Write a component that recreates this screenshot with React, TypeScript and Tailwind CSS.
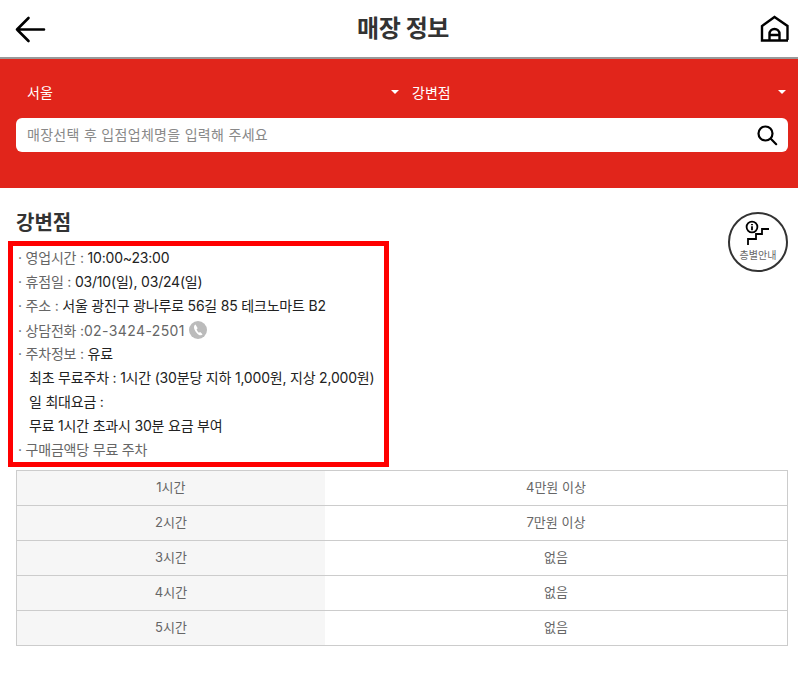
import React from 'react';

const font = { fontFamily: 'Inter, "Noto Sans CJK KR", "Noto Sans", sans-serif' };

const parking = [
  ['1시간', '4만원 이상'],
  ['2시간', '7만원 이상'],
  ['3시간', '없음'],
  ['4시간', '없음'],
  ['5시간', '없음'],
];

const Caret = () => (
  <span className="h-0 w-0 border-x-[4px] border-t-[4px] border-x-transparent border-t-white" />
);

const InfoLine = ({ label, children }: { label: string; children?: React.ReactNode }) => (
  <p className="h-6 whitespace-nowrap text-[14px] leading-[24px] tracking-[-0.2px] text-[#666]">
    · {label}
    <span className="text-[#222]">{children}</span>
  </p>
);

export default function App() {
  return (
    <div className="h-[690px] w-[798px] overflow-hidden bg-white" style={font}>
      {/* 상단 헤더 */}
      <header className="flex h-[59px] items-center justify-between border-b-2 border-[#999] pl-[15px] pr-[9px]">
        <svg width="31" height="28" viewBox="0 0 31 28" fill="none" stroke="#000" strokeWidth="2.6" strokeLinecap="round" strokeLinejoin="round">
          <path d="M29 14.5H2M13.5 3 2 14.5 13.5 26" />
        </svg>
        <h1 className="text-[24px] font-bold tracking-[-0.4px] text-[#333]">매장 정보</h1>
        <svg width="29" height="28" viewBox="0 0 29 28" fill="none" stroke="#000" strokeWidth="2.4">
          <path d="M28 25.5H2V11L14.5 2 27.5 11V25" />
          <path d="M9.5 25.5V19a5 5 0 0 1 10 0v6.5M9.5 20h10" />
        </svg>
      </header>

      {/* 매장 선택 */}
      <section className="h-[129px] bg-[#e1251b] px-[10px] pt-[13px]">
        <div className="mb-[6px] flex h-[40px] gap-[9px]">
          <div className="flex w-[390px] items-center justify-between pl-[17px] pr-[1px] text-[14px] text-white">
            서울
            <Caret />
          </div>
          <div className="flex flex-1 items-center justify-between pl-[3px] pr-[2px] text-[14px] text-white">
            강변점
            <Caret />
          </div>
        </div>
        <div className="ml-[6px] flex h-[34px] items-center justify-between rounded-[6px] bg-white pl-[11px] pr-[10px]">
          <span className="pb-[2px] text-[14px] tracking-[0.3px] text-[#888]">매장선택 후 입점업체명을 입력해 주세요</span>
          <svg width="22" height="22" viewBox="0 0 22 22" fill="none" stroke="#000" strokeWidth="2.2" strokeLinecap="round">
            <circle cx="9.5" cy="9.5" r="7" />
            <path d="m14.8 14.8 5.4 5.4" />
          </svg>
        </div>
      </section>

      {/* 매장 상세 */}
      <section className="relative pl-4 pr-[10px]">
        <h2 className="pt-[21px] text-[20px] font-bold leading-[28px] text-[#333]">강변점</h2>
        <div className="absolute right-[10px] top-[24px] flex h-[60px] w-[60px] flex-col items-center rounded-full border-2 border-[#333] pt-[6px]">
          <svg width="26" height="28" viewBox="0 0 26 28" fill="none" stroke="#000" strokeWidth="1.8">
            <circle cx="7" cy="7" r="5.4" />
            <path d="M7 4v1.2M7 6.2v4" strokeWidth="1.8" />
            <path d="M3 25V19H11V14H17V9H24" />
          </svg>
          <span className="mt-[1px] text-[10px] leading-[12px] text-[#666]">층별안내</span>
        </div>

        <div className="-ml-2 mt-[4px] w-[381px] border-[5px] border-[#ff0000] pl-[5px]">
          <InfoLine label="영업시간 : ">10:00~23:00</InfoLine>
          <InfoLine label="휴점일 : ">03/10(일), 03/24(일)</InfoLine>
          <InfoLine label="주소 : ">서울 광진구 광나루로 56길 85 테크노마트 B2</InfoLine>
          <p className="flex h-6 items-center gap-[4px] whitespace-nowrap text-[14px] tracking-[-0.2px] text-[#666]">
            <span>· 상담전화 :<span className="tracking-[0.4px]">02-3424-2501</span></span>
            <svg width="18" height="18" viewBox="0 0 18 18">
              <circle cx="9" cy="9" r="9" fill="#bbb" />
              <path d="M6.5 3.6c-1.6.9-1.9 2.9-1 5 1 2.3 2.8 4.6 5 5.6 1.1.4 2.5.1 3-.9l-2.3-2.3-1.3.7c-1-.7-1.9-2.1-2.3-3.4l1.1-1z" fill="#fff" />
            </svg>
          </p>
          <InfoLine label="주차정보 : ">유료</InfoLine>
          <p className="h-6 whitespace-nowrap pl-[11px] text-[14px] leading-[24px] tracking-[-0.2px] text-[#222]">최초 무료주차 : 1시간 (30분당 지하 1,000원, 지상 2,000원)</p>
          <p className="h-6 whitespace-nowrap pl-[11px] text-[14px] leading-[24px] tracking-[-0.2px] text-[#222]">일 최대요금 :</p>
          <p className="h-6 whitespace-nowrap pl-[11px] text-[14px] leading-[24px] tracking-[-0.2px] text-[#222]">무료 1시간 초과시 30분 요금 부여</p>
          <InfoLine label="구매금액당 무료 주차" />
        </div>

        <table className="mt-[3px] w-full table-fixed border-collapse text-center text-[13px] text-[#666]">
          <tbody>
            {parking.map(([time, amount]) => (
              <tr key={time} className="h-[35px] border border-[#ccc]">
                <td className="w-[40%] bg-[#f6f6f6] p-0">{time}</td>
                <td className="p-0">{amount}</td>
              </tr>
            ))}
          </tbody>
        </table>
      </section>
    </div>
  );
}
